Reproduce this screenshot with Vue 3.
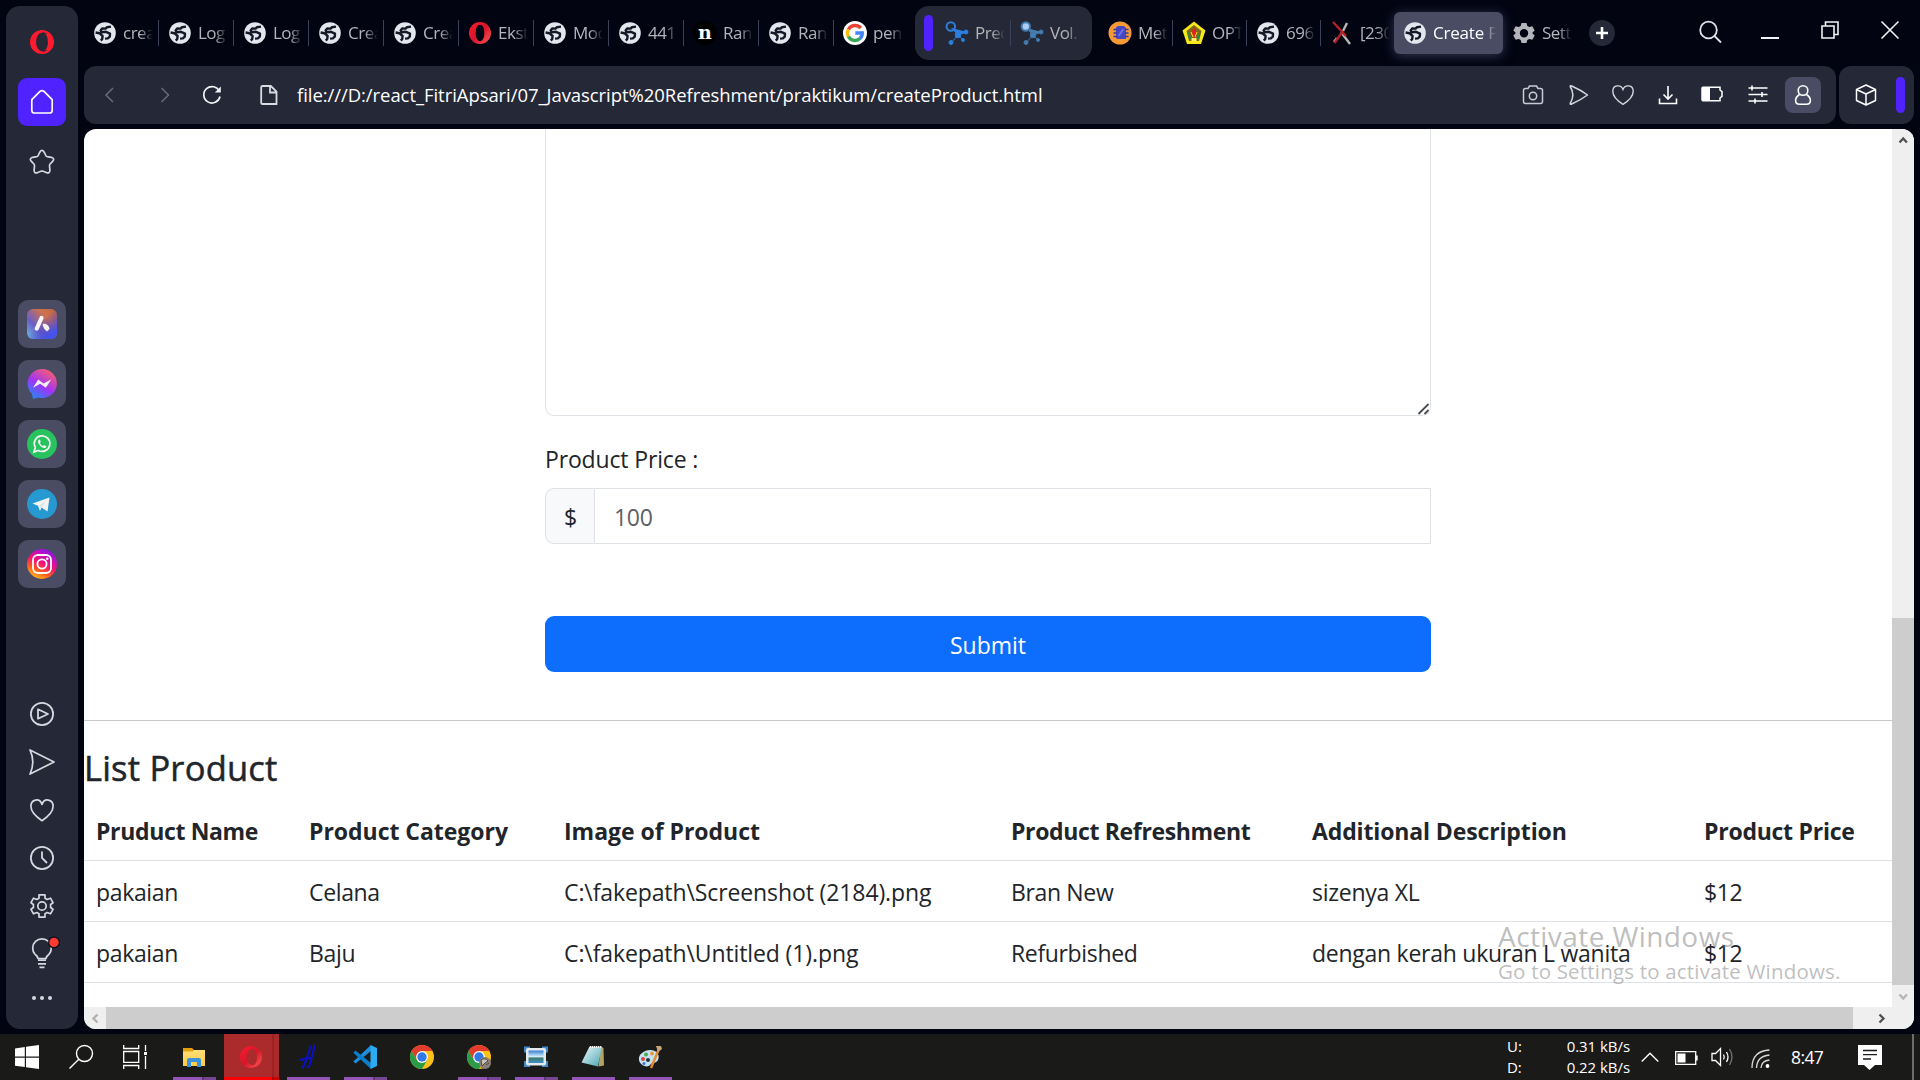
<script setup>
const leadingTabs = [
  { icon: 'globe', title: 'crea' },
  { icon: 'globe', title: 'Log' },
  { icon: 'globe', title: 'Log' },
  { icon: 'globe', title: 'Crea' },
  { icon: 'globe', title: 'Crea' },
  { icon: 'opera-tab', title: 'Ekst' },
  { icon: 'globe', title: 'Mod' },
  { icon: 'globe', title: '441' },
  { icon: 'n', title: 'Ran' },
  { icon: 'globe', title: 'Ran' },
  { icon: 'google', title: 'pen' },
]
const groupTabs = [
  { icon: 'nodes', title: 'Pred' },
  { icon: 'nodes-soft', title: 'Vol.' },
]
const trailingTabs = [
  { icon: 'metode', title: 'Met' },
  { icon: 'crest', title: 'OPT' },
  { icon: 'globe', title: '696' },
  { icon: 'cross', title: '[230' },
]
const apps = ['aria', 'messenger', 'whatsapp', 'telegram', 'instagram']
const tools = ['play', 'send', 'heart', 'clock', 'gear', 'bulb', 'dots']
const barTools = ['camera', 'send-s', 'heart-s', 'download', 'saver', 'sliders']
const url = 'file:///D:/react_FitriApsari/07_Javascript%20Refreshment/praktikum/createProduct.html'
const columns = ['Pruduct Name', 'Product Category', 'Image of Product', 'Product Refreshment', 'Additional Description', 'Product Price']
const products = [
  ['pakaian', 'Celana', 'C:\\fakepath\\Screenshot (2184).png', 'Bran New', 'sizenya XL', '$12'],
  ['pakaian', 'Baju', 'C:\\fakepath\\Untitled (1).png', 'Refurbished', 'dengan kerah ukuran L wanita', '$12'],
]
const tasks = [
  { icon: 'explorer', run: true, many: true },
  { icon: 'opera-task', run: true, many: true, active: true },
  { icon: 'hash', run: true },
  { icon: 'vscode', run: true, many: true },
  { icon: 'chrome', run: false },
  { icon: 'chrome-user', run: true, many: true },
  { icon: 'photos', run: true, many: true },
  { icon: 'notepad', run: true },
  { icon: 'paint', run: true },
]
</script>

<template>
  <div class="screen">
    <svg class="sprite" aria-hidden="true">
      <defs>
        <linearGradient id="g-opera" x1="0" y1="0" x2="1" y2="1"><stop offset="0" stop-color="#ff1b2d" /><stop offset=".5" stop-color="#d8152b" /><stop offset="1" stop-color="#ff5a55" /></linearGradient>
        <linearGradient id="g-aria" x1="0" y1="1" x2="1" y2="0"><stop offset="0" stop-color="#67c3e8" /><stop offset=".35" stop-color="#6a5fc4" /><stop offset=".7" stop-color="#d0714d" /><stop offset="1" stop-color="#b9683f" /></linearGradient>
        <linearGradient id="g-aria2" x1="0" y1="0" x2="1" y2="1"><stop offset=".45" stop-color="#4636c8" stop-opacity="0" /><stop offset=".85" stop-color="#4253f2" /></linearGradient>
        <linearGradient id="g-mess" x1=".2" y1="1" x2=".8" y2="0"><stop offset="0" stop-color="#1f8cf8" /><stop offset=".45" stop-color="#a033f5" /><stop offset="1" stop-color="#ff6068" /></linearGradient>
        <linearGradient id="g-insta" x1=".2" y1="1" x2=".7" y2="0"><stop offset="0" stop-color="#ffc81e" /><stop offset=".3" stop-color="#ff5a1f" /><stop offset=".55" stop-color="#f0127a" /><stop offset="1" stop-color="#8a12f5" /></linearGradient>
        <linearGradient id="g-folder" x1="0" y1="0" x2="0" y2="1"><stop offset="0" stop-color="#ffdf77" /><stop offset="1" stop-color="#ffcb45" /></linearGradient>
        <linearGradient id="g-sky" x1="0" y1="0" x2="0" y2="1"><stop offset="0" stop-color="#2f7fd0" /><stop offset=".5" stop-color="#d8eefa" /><stop offset=".6" stop-color="#3c7b6b" /><stop offset="1" stop-color="#3f90c8" /></linearGradient>
        <linearGradient id="g-note" x1="0" y1="0" x2="1" y2="1"><stop offset="0" stop-color="#eef9fa" /><stop offset="1" stop-color="#4ba5b5" /></linearGradient>
      </defs>
      <symbol id="globe" viewBox="0 0 24 24">
        <circle cx="12" cy="12" r="10.8" fill="#e3e6ec" />
        <path d="M2.600 11.500 6.400 12.200 9.600 15 9.200 18 7.800 19.600M18 5.600 14 6.200 12.600 7.600 9.200 7.400 7.600 9.400 8.600 11.200 13 10.800 17 12.600 16.800 15.600 14.800 17.400 12 17.600" fill="none" stroke="#151827" stroke-width="2.400" stroke-linejoin="round" />
      </symbol>
      <symbol id="opera-tab" viewBox="0 0 24 24"><path fill="url(#g-opera)" fill-rule="evenodd" d="M12 1a11 11 0 1 0 0 22 11 11 0 0 0 0-22zm0 2.800c2.700 0 4.300 3.500 4.300 8.200s-1.600 8.200-4.300 8.200-4.300-3.500-4.300-8.200S9.300 3.800 12 3.800z" /></symbol>
      <symbol id="opera" viewBox="0 0 24 24"><path fill="#ff1b2d" fill-rule="evenodd" d="M12 0a12 12 0 1 0 0 24 12 12 0 0 0 0-24zm1 2.600c3 .8 4.900 4.600 4.900 9.400s-1.900 8.600-4.900 9.400c-4.200 0-6.900-4.200-6.900-9.400S8.800 2.600 13 2.600z" /><path d="M13 2.200 17 4M13 21.800 17 20" stroke="#252836" stroke-width=".8" /></symbol>
      <symbol id="n" viewBox="0 0 24 24"><circle cx="12" cy="12" r="12" fill="#000" /><text x="12" y="18.200" text-anchor="middle" font-family="DejaVu Serif" font-weight="700" font-size="19" fill="#fff">n</text></symbol>
      <symbol id="google" viewBox="0 0 24 24"><circle cx="12" cy="12" r="12" fill="#fff" /><g fill="none" stroke-width="3.400"><path d="M17.800 7.200A7.500 7.500 0 0 0 5.400 8.500" stroke="#ea4335" /><path d="M5.400 8.500a7.500 7.500 0 0 0 0 7.200" stroke="#fbbc05" /><path d="M5.400 15.500A7.500 7.500 0 0 0 17 17.600" stroke="#34a853" /><path d="M16.700 17.800A7.400 7.400 0 0 0 19.300 12H12.300" stroke="#4285f4" /></g></symbol>
      <symbol id="nodes" viewBox="0 0 24 24"><g stroke="#2c7fd8" fill="#2c7fe0"><path d="M6.500 7 13 14 22 11M13 14 6 22M13 14 18 19" /><circle cx="5.800" cy="5.500" r="4.200" fill="none" stroke-width="2" /><circle cx="13" cy="14" r="2.800" /><circle cx="21" cy="11" r="2" /><circle cx="6" cy="21.500" r="2" /><circle cx="18" cy="19" r="1.500" /></g></symbol>
      <symbol id="nodes-soft" viewBox="0 0 24 24"><g stroke="#3f78ad" fill="#477db0"><path d="M6.500 7 13 14 22 11M13 14 6 22M13 14 18 19" /><circle cx="5.800" cy="5.500" r="4.200" fill="#a9cdf3" stroke-width="2" /><circle cx="13" cy="14" r="2.800" /><circle cx="21" cy="11" r="2" /><circle cx="6" cy="21.500" r="2" /><circle cx="18" cy="19" r="1.500" /></g></symbol>
      <symbol id="metode" viewBox="0 0 24 24"><circle cx="12" cy="12" r="11.500" fill="#f59a35" /><path d="M8 6.500 10 5h6l2 2v11H9l-1-1z" fill="#4446c4" /><path d="M5.500 8.500H9M5.500 12H9M5.500 15.500H9M17 8.500h3.500M17 12h3.500M17 15.500h3.500" stroke="#3a35a8" stroke-width="1.500" /><path d="M10.500 15 15.500 8" stroke="#6a72e8" stroke-width="2" /></symbol>
      <symbol id="crest" viewBox="0 0 24 24"><path d="M12 .5 23.500 9.500 19 23H5L.5 9.500z" fill="#f7e81c" /><path d="M12 4 19.500 10 17 20H7L4.500 10z" fill="#7b6a1b" /><path d="M12 6 15 12 12 20 9 12z" fill="#e42222" /><path d="M5.500 10 9.500 18H7zM18.500 10 14.500 18H17z" fill="#139144" /><path d="M9 11 11 16M15 11 13 16" stroke="#f7e81c" /><path d="M9.500 17h5v3h-5z" fill="#fff06a" /></symbol>
      <symbol id="cross" viewBox="0 0 24 24"><path d="M17 2 13 10M7 17 4 21M20 23 11 11" stroke="#b8b3ae" stroke-width="2.400" /><path d="M3 1 16 15M13 10 4.500 22" stroke="#b51f27" stroke-width="2.400" /></symbol>
      <symbol id="gear-fill" viewBox="0 0 24 24"><path fill="#b4b5ba" fill-rule="evenodd" d="M9.500 2h5l.8 3 2 1.100 3-.8 2.400 4.200-2.200 2.100v1l2.200 2-2.400 4.200-3-.8-2 1.100-.8 3h-5l-.8-3-2-1.100-3 .8-2.400-4.200 2.200-2v-1L1.300 9.500l2.400-4.200 3 .8 2-1.100zM12 8a4.200 4.200 0 1 0 0 8.400A4.200 4.200 0 0 0 12 8z" /></symbol>

      <symbol id="home" viewBox="0 0 24 24"><path d="M1.800 9.600v10.600c0 1.700 1 2.800 2.700 2.800h15c1.700 0 2.700-1.100 2.700-2.800V9.600L14 1.400q-2-1.600-4 0z" fill="none" stroke="#fff" stroke-width="1.700" stroke-linejoin="round" /></symbol>
      <symbol id="star" viewBox="0 0 26 26"><path d="M10.800 3.200q2.200-3.800 4.400 0l1.600 3.300q.4.900 1.400 1.100l4.200.7q3.800 1.200 1.200 4l-2.500 2.700q-.7.800-.6 1.900l.4 4.400q-.2 3.700-3.700 2.200l-3-1.200q-1.200-.4-2.400 0l-3 1.200q-3.500 1.500-3.700-2.200l.4-4.400q.1-1.100-.6-1.900l-2.500-2.700q-2.600-2.800 1.200-4l4.200-.7q1-.2 1.400-1.100z" fill="none" stroke="#d4d8e0" stroke-width="1.700" stroke-linejoin="round" /></symbol>
      <symbol id="aria" viewBox="0 0 30 30"><rect width="30" height="30" rx="6" fill="url(#g-aria)" /><rect width="30" height="30" rx="6" fill="url(#g-aria2)" /><path d="M14.500 9 9.800 19.500" stroke="#f5f5f5" stroke-width="4.200" stroke-linecap="round" /><path d="M16.500 14.500Q22 15 22.500 20L20 22.500Q16.500 20 15.500 16z" fill="#f5f5f5" /></symbol>
      <symbol id="messenger" viewBox="0 0 30 30"><path d="M15 0a15 14.500 0 1 1-4 28.500L6 30l-1-5A14.500 14.500 0 0 1 15 0z" fill="url(#g-mess)" /><path d="m6 18.800 5.200-8.200 5.300 4L24.200 10.500 18.800 18.800l-5.600-4z" fill="#f0f0f0" /></symbol>
      <symbol id="whatsapp" viewBox="0 0 30 30"><circle cx="15" cy="15" r="15" fill="#27c35e" /><path d="m7 23 1.300-4.600a7.800 7.800 0 1 1 3 3z" fill="none" stroke="#f3f5f3" stroke-width="1.700" /><path d="M11.800 10.500c-2 2.500.2 5.300 2.500 7.200 2.200 1.700 4.200 1.800 5.200-.3l-2.300-1.500-1.200 1.200c-1.300-.4-2.500-1.700-3.100-3l.9-1.200-.9-2.200z" fill="#f3f5f3" /></symbol>
      <symbol id="telegram" viewBox="0 0 30 30"><circle cx="15" cy="15" r="15" fill="#2799d1" /><path d="M5.500 14.600 22.500 8.500 20.500 22.500 14.500 18.500 13 22 11 16.800z" fill="#f3f3f3" /><path d="m11.500 17 8-5.500-5 7z" fill="#d9e6ee" /></symbol>
      <symbol id="instagram" viewBox="0 0 30 30"><circle cx="15" cy="15" r="15" fill="url(#g-insta)" /><g fill="none" stroke="#fff" stroke-width="1.800"><rect x="6" y="6" width="18" height="18" rx="5" /><circle cx="15" cy="15" r="4.600" /></g><circle cx="20.300" cy="9.800" r="1.200" fill="#fff" /></symbol>

      <symbol id="play" viewBox="0 0 26 26"><g fill="none" stroke="#d4d8e0" stroke-width="1.800" stroke-linejoin="round"><circle cx="13" cy="13" r="11.100" /><path d="M9 8.300v9.400L19 13z" /></g></symbol>
      <symbol id="send" viewBox="0 0 26 26"><path d="M1 .9 25 13 1 25.100Q6.600 13 1 .9z" fill="none" stroke="#d4d8e0" stroke-width="1.700" stroke-linejoin="round" /></symbol>
      <symbol id="heart" viewBox="0 0 26 26"><path d="M13 23.700C6 19 1.900 14.500 1.900 9.300c0-6.800 8.600-9.100 11.100-1.900 2.500-7.200 11.100-4.900 11.100 1.900 0 5.200-4.100 9.700-11.100 14.400z" fill="none" stroke="#d4d8e0" stroke-width="1.700" stroke-linejoin="round" /></symbol>
      <symbol id="clock" viewBox="0 0 26 26"><g fill="none" stroke="#d4d8e0" stroke-width="1.800"><circle cx="13" cy="13" r="11.100" /><path d="M13 6.500V13l5 5" /></g></symbol>
      <symbol id="gear" viewBox="0 0 26 26"><g fill="none" stroke="#d4d8e0" stroke-width="1.700" stroke-linejoin="round"><path d="M10 1.900h6v3.300l2.200 1.300 3.300-1.300 2.500 4.500-2.400 1.800v3l2.400 1.800-2.500 4.500-3.300-1.300-2.200 1.300v3.300h-6v-3.300l-2.200-1.300-3.300 1.300L2 16.300l2.400-1.800v-3L2 9.700l2.500-4.500 3.300 1.300L10 5.200z" /><circle cx="13" cy="13" r="4.200" /></g></symbol>
      <symbol id="bulb" viewBox="0 0 30 30"><path d="M11 19.500Q10.500 17 8 15.300a9.300 9.300 0 1 1 14 0q-2.500 1.700-3 4.200z" fill="none" stroke="#d4d8e0" stroke-width="1.700" /><path d="M11 21.200h8M11 24.800h8M12.500 28.300h5" stroke="#d4d8e0" stroke-width="1.800" /><circle cx="27" cy="3.400" r="6" fill="#0c0e1b" /><circle cx="27" cy="3.400" r="4.700" fill="#ff3a30" /></symbol>
      <symbol id="dots" viewBox="0 0 26 26"><g fill="#d4d8e0"><circle cx="5" cy="9" r="2" /><circle cx="13" cy="9" r="2" /><circle cx="21" cy="9" r="2" /></g></symbol>

      <symbol id="camera" viewBox="0 0 22 22"><g fill="none" stroke="#c9ccd6" stroke-width="1.500"><path d="M3.500 4.500H6L7.500 2h7L16 4.500h2.500q2 0 2 2v11q0 2-2 2h-15q-2 0-2-2v-11q0-2 2-2z" /><circle cx="11" cy="12" r="3.700" /></g></symbol>
      <symbol id="send-s" viewBox="0 0 22 22"><path d="M3.200 2.500Q3.200 1.300 4.700 2 13.700 6 20.500 11 13.700 16 4.700 20 3.200 20.700 3.200 19.500 8.500 11 3.200 2.500z" fill="none" stroke="#d4d7df" stroke-width="1.500" stroke-linejoin="round" /></symbol>
      <symbol id="heart-s" viewBox="0 0 22 22"><path d="M11 20.300C4 16 .8 11.800.8 7.300.8.700 9 .2 11 5.400 13 .2 21.200.7 21.200 7.300c0 4.500-3.200 8.700-10.200 13z" fill="none" stroke="#d4d7df" stroke-width="1.400" /></symbol>
      <symbol id="download" viewBox="0 0 22 22"><path d="M11 2v13M6.500 10.500 11 15l4.500-4.500M2.500 14.500v5h17v-5" fill="none" stroke="#fff" stroke-width="1.600" /></symbol>
      <symbol id="saver" viewBox="0 0 22 22"><path d="M1 3.200h17V6l2 1.700v4.600L18 14v2.800H1q-1 0-1-1V4.200q0-1 1-1z" fill="none" stroke="#fff" stroke-width="1.500" /><path d="M0 3.200h8v13.600H0z" fill="#fff" /></symbol>
      <symbol id="sliders" viewBox="0 0 22 22"><path d="M1.500 4h19M1.500 10.500h19M1.500 17h19M5 1.500v5M15 8v5M8 14.500v5" stroke="#fff" stroke-width="1.600" /></symbol>
      <symbol id="person" viewBox="0 0 22 22"><g fill="none" stroke="#fff" stroke-width="1.600"><circle cx="11" cy="6.500" r="4.800" /><path d="M7.500 10.500Q3.600 13 3.600 16.500q0 3.700 4 3.700h6.800q4 0 4-3.700 0-3.500-3.900-6" /></g></symbol>
      <symbol id="cube" viewBox="0 0 22 22"><path d="M11 1 20.500 5.500V16.500L11 21 1.500 16.500V5.500zM1.500 5.500 11 10l9.500-4.500M11 10v11" fill="none" stroke="#fff" stroke-width="1.500" stroke-linejoin="round" /></symbol>
      <symbol id="back" viewBox="0 0 22 22"><path d="M14 4 7 11l7 7" fill="none" stroke="#696c79" stroke-width="1.500" /></symbol>
      <symbol id="forward" viewBox="0 0 22 22"><path d="m7.500 4 7 7-7 7" fill="none" stroke="#696c79" stroke-width="1.500" /></symbol>
      <symbol id="reload" viewBox="0 0 22 22"><path d="M18.500 7.500A8.200 8.200 0 1 0 19 12.500" fill="none" stroke="#f1f2f4" stroke-width="1.700" /><path d="M19.800 2.500v6h-6z" fill="#f1f2f4" /></symbol>
      <symbol id="doc" viewBox="0 0 22 22"><path d="M4.500 2h8.300l5.700 5.700V20h-14q-1.300 0-1.300-1.300V3.300Q3.200 2 4.500 2zM12 2v6.500h6.500" fill="none" stroke="#d9dbe1" stroke-width="1.800" /></symbol>
      <symbol id="find" viewBox="0 0 24 24"><g fill="none" stroke="#e0e2e8" stroke-width="1.800"><circle cx="10.500" cy="10" r="8.300" /><path d="m16.500 16 6.500 6.500" /></g></symbol>
      <symbol id="minimize" viewBox="0 0 18 18"><path d="M0 17h18" stroke="#f2f3f5" stroke-width="2" /></symbol>
      <symbol id="restore" viewBox="0 0 18 18"><path d="M1 5h12v12H1zM4.500 5V1H17v12.500h-4" fill="none" stroke="#f2f3f5" stroke-width="1.600" /></symbol>
      <symbol id="close" viewBox="0 0 18 18"><path d="m.5.500 17 17M17.500.500l-17 17" stroke="#f2f3f5" stroke-width="1.600" /></symbol>

      <symbol id="start" viewBox="0 0 24 24"><path d="M0 3.400 9.800 2v9.500H0zM11 1.800 24 0v11.500H11zM0 12.700h9.800v9.400L0 20.700zM11 12.700h13V24l-13-1.700z" fill="#fff" /></symbol>
      <symbol id="task-search" viewBox="0 0 24 24"><g fill="none" stroke="#fff" stroke-width="1.400"><circle cx="15.500" cy="8.500" r="8" /><path d="M9.800 14.200.5 23.500" /></g></symbol>
      <symbol id="task-view" viewBox="0 0 24 24"><path d="M.7 0v3.500h15V0M.7 24v-3.500h15V24M.7 6.500h15v10.800H.7zM22.500 0v6M22.500 11v13" fill="none" stroke="#fff" stroke-width="1.300" /><path d="M21 7h3v3h-3z" fill="#fff" /></symbol>
      <symbol id="explorer" viewBox="0 0 24 24"><path d="M1 3h9l2 2v5H1z" fill="#e5a00d" /><path d="M1 6.500h9.500L12 5h11v16H1z" fill="url(#g-folder)" /><path d="M5 21v-6q0-2 2-2h10q2 0 2 2v7h-4v-5H9v5H5z" fill="#3a93dc" /></symbol>
      <symbol id="opera-task" viewBox="0 0 24 24"><path fill="url(#g-opera)" fill-rule="evenodd" d="M12 1a11 11 0 1 0 0 22 11 11 0 0 0 0-22zm1.500 3c3 0 4.500 3.500 4.500 8s-1.500 8-4.500 8c-3.200 0-6-3.500-6-8s2.800-8 6-8z" /></symbol>
      <symbol id="hash" viewBox="0 0 24 24"><path d="M13 1.500h2.500M19.500 1H17M14.500 1.500Q11.500 13 7 22.500H5M18.500 1.500Q16 12 13 22H11M3.500 15Q10 13 15.500 13" fill="none" stroke="#0a10c8" stroke-width="2" /></symbol>
      <symbol id="vscode" viewBox="0 0 24 24"><path d="M18 0 2.500 14.500.3 16.200 2.500 18.500 18 6z" fill="#1a8fdb" /><path d="M18 24 .3 7.800 2.500 5.500 18 18z" fill="#0c7dc9" /><path d="m17.500 0 6.500 3v18l-6.500 3z" fill="#2cabf2" /></symbol>
      <symbol id="chrome" viewBox="0 0 24 24"><circle cx="12" cy="12" r="12" fill="#fbc116" /><path d="M1.600 6A12 12 0 0 1 22.400 6H12L6.800 15z" fill="#e33b2e" /><path d="M1.600 6A12 12 0 0 0 12 24l5.200-9H6.800z" fill="#2a9c48" /><circle cx="12" cy="12" r="5.900" fill="#fff" /><circle cx="12" cy="12" r="4.700" fill="#3178e8" /></symbol>
      <symbol id="chrome-user" viewBox="0 0 24 24"><use href="#chrome" width="24" height="24" /><circle cx="18" cy="18" r="6" fill="#8a8078" /><path d="M14 15q4-3 7 1l-3 2-3 3zM19 20l3-2" fill="#c9c0b6" stroke="#51483f" /></symbol>
      <symbol id="photos" viewBox="0 0 24 24"><path d="M0 1.500h6v6H0zM18 1.500h6v6h-6zM0 16h6v6H0zM18 16h6v6h-6z" fill="#4189c9" /><rect x="2" y="3" width="20" height="17.500" rx="2" fill="#e4e9ee" /><path d="M4.500 5.500h15v12.500h-15z" fill="url(#g-sky)" /></symbol>
      <symbol id="notepad" viewBox="0 0 24 24"><path d="M20 1.500 22.500 3 23 20.500 17.500 21.500z" fill="#b5a267" /><path d="M8.500 1.500H21L17 21.500.5 17.500z" fill="url(#g-note)" /><path d="M9 2h11.500" stroke="#f1f1f1" stroke-width="2" stroke-dasharray="1 1" /></symbol>
      <symbol id="paint" viewBox="0 0 24 24"><path d="M1 15C0 9 7 4.500 13 5c7 .5 9 6 7 10s-6 2-8 5-10 1-11-5z" fill="#c3e2f2" /><circle cx="5" cy="14" r="2" fill="#e2413a" /><circle cx="8" cy="9.500" r="1.900" fill="#4aaa4d" /><circle cx="14" cy="8.500" r="1.900" fill="#f09535" /><circle cx="10" cy="15" r="2" fill="#20343f" /><circle cx="6" cy="18.500" r="1.500" fill="#4070d0" /><path d="M20.500 5 13 23" stroke="#e38b31" stroke-width="2.500" /><path d="m18 1 5 0 1 3-4 3z" fill="#caa27b" /></symbol>
    </svg>

    <div class="browser">
      <aside class="sidebar">
        <div class="side-top">
          <svg class="logo"><use href="#opera" /></svg>
          <div class="home"><svg class="i24"><use href="#home" /></svg></div>
          <svg class="i26"><use href="#star" /></svg>
        </div>
        <div class="side-apps">
          <div v-for="a in apps" :key="a" class="app"><svg class="i30"><use :href="'#' + a" /></svg></div>
        </div>
        <div class="side-tools">
          <div v-for="t in tools" :key="t" class="tool"><svg :class="t === 'bulb' ? 'i30' : 'i26'"><use :href="'#' + t" /></svg></div>
        </div>
      </aside>

      <div class="main">
        <header class="tabs">
          <div v-for="(t, i) in leadingTabs" :key="i" class="tab" :class="{ last: i === leadingTabs.length - 1 }">
            <svg class="i24"><use :href="'#' + t.icon" /></svg><span class="title">{{ t.title }}</span>
          </div>
          <div class="group">
            <i class="group-bar"></i>
            <div v-for="(t, i) in groupTabs" :key="i" class="tab" :class="{ last: i === 1 }">
              <svg class="i24"><use :href="'#' + t.icon" /></svg><span class="title">{{ t.title }}</span>
            </div>
          </div>
          <div v-for="(t, i) in trailingTabs" :key="'t' + i" class="tab narrow" :class="{ last: i === 3 }">
            <svg class="i24"><use :href="'#' + t.icon" /></svg><span class="title">{{ t.title }}</span>
          </div>
          <div class="tab active"><svg class="i24"><use href="#globe" /></svg><span class="title">Create P</span></div>
          <div class="tab last"><svg class="i24"><use href="#gear-fill" /></svg><span class="title">Sett</span></div>
          <div class="new-tab"><svg viewBox="0 0 26 26"><path d="M13 7v12M7 13h12" stroke="#fff" stroke-width="2.600" /></svg></div>
          <div class="window-tools">
            <svg class="i24"><use href="#find" /></svg>
            <svg class="i18"><use href="#minimize" /></svg>
            <svg class="i18"><use href="#restore" /></svg>
            <svg class="i18"><use href="#close" /></svg>
          </div>
        </header>

        <div class="bar-row">
          <div class="address">
            <svg class="i22"><use href="#back" /></svg>
            <svg class="i22 forward"><use href="#forward" /></svg>
            <svg class="i22 reload"><use href="#reload" /></svg>
            <svg class="i22 doc"><use href="#doc" /></svg>
            <span class="url">{{ url }}</span>
            <div class="bar-tools">
              <svg v-for="b in barTools" :key="b" class="i22"><use :href="'#' + b" /></svg>
            </div>
            <div class="profile"><svg class="i22"><use href="#person" /></svg></div>
          </div>
          <div class="extension"><svg class="i22"><use href="#cube" /></svg><i class="ext-bar"></i></div>
        </div>

        <div class="page">
          <div class="content">
            <form class="form" @submit.prevent>
              <div class="textarea">
                <svg viewBox="0 0 14 14"><path d="M2.500 13 12.500 3M8.500 13 12.500 9" stroke="#4a4d50" stroke-width="1.800" /></svg>
              </div>
              <div class="label"><span>Product Price :</span></div>
              <div class="input-group">
                <span class="addon">$</span><span class="field">100</span>
              </div>
              <div class="submit">Submit</div>
            </form>
            <hr />
            <h4>List Product</h4>
            <table>
              <colgroup><col class="c1" /><col class="c2" /><col class="c3" /><col class="c4" /><col class="c5" /><col class="c6" /></colgroup>
              <thead><tr><th v-for="c in columns" :key="c">{{ c }}</th></tr></thead>
              <tbody>
                <tr v-for="(p, r) in products" :key="r"><td v-for="(v, c) in p" :key="c">{{ v }}</td></tr>
              </tbody>
            </table>
          </div>
          <div class="vbar">
            <div class="cap"><svg viewBox="0 0 22 22"><path d="m7.500 13.500 3.700-4 3.700 4" fill="none" stroke="#505050" stroke-width="2.300" /></svg></div>
            <div class="vthumb"></div>
            <div class="cap"><svg viewBox="0 0 22 22"><path d="m7.500 9.500 3.700 4 3.700-4" fill="none" stroke="#b5b5b5" stroke-width="2.300" /></svg></div>
          </div>
          <div class="hbar">
            <div class="cap"><svg viewBox="0 0 22 22"><path d="M13.500 7.500 9.500 11.500l4 4" fill="none" stroke="#b0b0b0" stroke-width="2.300" /></svg></div>
            <div class="hthumb"></div>
            <div class="cap end"><svg viewBox="0 0 22 22"><path d="m9.500 7.500 4 4-4 4" fill="none" stroke="#505050" stroke-width="2.300" /></svg></div>
          </div>
        </div>
      </div>
    </div>

    <footer class="taskbar">
      <div class="sys"><svg class="i24"><use href="#start" /></svg><svg class="i24"><use href="#task-search" /></svg><svg class="i24"><use href="#task-view" /></svg></div>
      <div v-for="t in tasks" :key="t.icon" class="task" :class="{ run: t.run, many: t.many, on: t.active }"><svg class="i24"><use :href="'#' + t.icon" /></svg></div>
      <div class="tray">
        <div class="net"><span>U:</span><span>0.31 kB/s</span><span>D:</span><span>0.22 kB/s</span></div>
        <svg class="chev" viewBox="0 0 18 12"><path d="m.7 10.500 8.300-8.300 8.300 8.300" fill="none" stroke="#fff" stroke-width="1.400" /></svg>
        <svg class="batt" viewBox="0 0 23 14"><path d="M.7.700h20v12.600h-20zM22 4.500v5" fill="none" stroke="#fff" stroke-width="1.300" /><path d="M2.500 2.500h8v9h-8z" fill="#fff" /></svg>
        <svg class="vol" viewBox="0 0 23 20"><path d="M1 6.500h3.500L9.500 1.500v17l-5-5H1z" fill="none" stroke="#fff" stroke-width="1.300" /><path d="M12.500 7.500q1.500 2.500 0 5M15.500 5q3 5 0 10" fill="none" stroke="#fff" stroke-width="1.300" /><path d="M18.500 2q5 8 0 16" fill="none" stroke="#737373" stroke-width="1.300" /></svg>
        <svg class="wifi" viewBox="0 0 20 20"><path d="M1 19Q1 2 18.500 1M5.500 19Q6 7 18.500 6M10 19Q10.500 11.500 18.500 11" fill="none" stroke="#d8d8d8" stroke-width="1.300" /><circle cx="16.500" cy="17" r="1.900" fill="#fff" /></svg>
        <span class="time">8:47</span>
        <svg class="note" viewBox="0 0 24 25"><path d="M0 0h24v20h-7l-5.500 5-5.500-5H0z" fill="#fff" /><path d="M5 5.500h14M5 9.700h14M5 14h8" stroke="#1a1a1a" stroke-width="1.300" /></svg>
        <i class="peek"></i>
      </div>
    </footer>

    <div class="watermark"><div class="wm1">Activate Windows</div><div class="wm2">Go to Settings to activate Windows.</div></div>
  </div>
</template>

<style>
body { margin: 0; background: #020412; overflow: hidden; }
</style>

<style scoped>
* { box-sizing: border-box; }
.screen { position: relative; width: 1920px; height: 1080px; overflow: hidden; background: #020412; font-family: "Open Sans", "Noto Sans", sans-serif; display: flex; flex-direction: column; }
.sprite { position: absolute; width: 0; height: 0; }
svg { display: block; flex: none; overflow: visible; }
symbol { overflow: visible; }
.i18 { width: 18px; height: 18px; }
.i22 { width: 22px; height: 22px; }
.i24 { width: 24px; height: 24px; }
.i26 { width: 26px; height: 26px; }
.i30 { width: 30px; height: 30px; }

.browser { height: 1034px; display: flex; padding: 0 6px 5px; gap: 6px; }
.sidebar { width: 72px; height: 1023px; margin-top: 6px; border-radius: 14px; background: #252836; display: flex; flex-direction: column; align-items: center; }
.side-top { height: 294px; padding-top: 24px; display: flex; flex-direction: column; align-items: center; }
.logo { width: 24px; height: 24px; }
.home { width: 48px; height: 48px; margin: 24px 0 23px; border-radius: 9px; background: #4f22ff; display: flex; align-items: center; justify-content: center; }
.side-apps { display: flex; flex-direction: column; gap: 12px; height: 390px; }
.app { width: 48px; height: 48px; border-radius: 10px; background: #4a4c64; display: flex; align-items: center; justify-content: center; }
.tool { height: 48px; display: flex; align-items: center; justify-content: center; }

.main { width: 1830px; display: flex; flex-direction: column; }
.tabs { height: 66px; display: flex; align-items: center; }
.tab { position: relative; flex: none; width: 75px; height: 26px; display: flex; align-items: center; padding-left: 9px; gap: 6px; border-right: 1px solid #3d4059; color: #b4b5ba; font-size: 17px; }
.tab.last { border-right-color: transparent; }
.tab.narrow { width: 74px; }
.title { width: 30px; overflow: hidden; white-space: nowrap; letter-spacing: -.5px; line-height: 26px; -webkit-mask-image: linear-gradient(90deg, #000 55%, transparent 100%); mask-image: linear-gradient(90deg, #000 55%, transparent 100%); }
.group { flex: none; width: 177px; height: 54px; margin: 0 7px 0 6px; padding-left: 9px; border-radius: 14px; background: #252836; display: flex; align-items: center; }
.group-bar { width: 9px; height: 36px; border-radius: 5px; background: #4f22ff; margin-right: 3px; }
.tab.active { width: 109px; height: 42px; margin-left: -1px; border: 0; border-radius: 6px; background: #4a4c64; color: #fff; box-shadow: 0 2px 12px rgba(90, 94, 130, .55); }
.tab.active .title { width: 63px; letter-spacing: -.2px; -webkit-mask-image: linear-gradient(90deg, #000 76%, transparent); mask-image: linear-gradient(90deg, #000 76%, transparent); }
.new-tab { flex: none; width: 26px; height: 26px; margin-left: 11px; border-radius: 50%; background: #252836; }
.window-tools { flex: 1; display: flex; align-items: center; justify-content: flex-end; gap: 42px; padding-right: 15px; padding-bottom: 6px; }
.window-tools .i24 { margin: 4px -3px 0 0; }

.bar-row { height: 58px; display: flex; gap: 3px; }
.address { width: 1752px; height: 58px; border-radius: 12px; background: #252836; display: flex; align-items: center; padding: 0 15px; }
.forward { margin-left: 33px; }
.reload { margin-left: 25px; }
.doc { margin-left: 35px; }
.url { width: 1100px; margin: -2px 0 0 17px; color: #fff; font-size: 18.500px; letter-spacing: -.06px; white-space: nowrap; }
.bar-tools { display: flex; gap: 23px; margin-left: auto; margin-right: 16px; }
.profile { width: 36px; height: 36px; border-radius: 8px; background: #4a4c64; display: flex; align-items: center; justify-content: center; }
.extension { width: 75px; height: 58px; border-radius: 12px; background: #252836; display: flex; align-items: center; padding-left: 16px; }
.ext-bar { width: 9px; height: 36px; margin-left: 19px; border-radius: 5px; background: #4f22ff; }

.page { width: 1830px; height: 900px; margin-top: 5px; border-radius: 12px; overflow: hidden; background: #fff; display: grid; grid-template-columns: 1808px 22px; grid-template-rows: 878px 22px; }
.content { color: #212529; font-size: 23px; overflow: hidden; }
.form { width: 886px; margin-left: 461px; }
.textarea { height: 287px; border: 1px solid #dee2e6; border-top: 0; border-radius: 0 0 9px 9px; display: flex; align-items: flex-end; justify-content: flex-end; }
.textarea svg { width: 14px; height: 14px; }
.label { height: 72px; display: flex; align-items: center; padding-top: 14px; letter-spacing: -.15px; }
.label span { line-height: 36px; }
.input-group { height: 56px; display: flex; line-height: 56px; }
.addon { width: 50px; border: 1px solid #dee2e6; border-radius: 9px 0 0 9px; background: #f8f9fa; text-align: center; padding-left: 1px; }
.field { flex: 1; border: 1px solid #dee2e6; border-left: 0; padding-left: 19px; color: #5c6066; letter-spacing: -.3px; }
.submit { height: 56px; margin-top: 72px; border-radius: 9px; background: #0d6efd; color: #fff; text-align: center; line-height: 59px; letter-spacing: 0; }
hr { height: 1px; margin: 48px 0 25px; border: 0; background: #c8c9ca; }
h4 { margin: 0 0 10px; height: 43px; line-height: 43px; font-size: 34.500px; font-weight: 500; letter-spacing: .2px; -webkit-text-stroke: .5px #212529; }
table { width: 1808px; table-layout: fixed; border-collapse: collapse; }
.c1 { width: 213px; } .c2 { width: 255px; } .c3 { width: 447px; } .c4 { width: 301px; } .c5 { width: 392px; } .c6 { width: 200px; }
th, td { height: 61px; padding: 2px 12px 0; text-align: left; border-bottom: 1px solid #dee2e6; white-space: nowrap; letter-spacing: -.35px; line-height: 36px; }
th { font-weight: 700; padding-top: 4px; }
th:nth-child(2), th:nth-child(3) { letter-spacing: -.03px; }
th:nth-child(5) { letter-spacing: -.13px; }
th:nth-child(6) { letter-spacing: -.25px; }
td:nth-child(3) { letter-spacing: -.11px; }
td:nth-child(5) { letter-spacing: -.26px; }
.vbar { background: #efefef; display: flex; flex-direction: column; }
.cap, .cap svg { width: 22px; height: 22px; }
.vthumb { height: 367px; margin-top: auto; background: #cdcdcd; }
.hbar { grid-column: 1 / 3; background: #efefef; display: flex; }
.hthumb { width: 1747px; background: #cdcdcd; }
.end { margin-left: 17px; }

.taskbar { height: 46px; background: #1a1a19; display: flex; color: #fff; }
.sys { width: 167px; padding-left: 15px; display: flex; gap: 30px; align-items: center; }
.task { position: relative; width: 57px; display: flex; align-items: center; justify-content: center; padding-right: 4px; }
.task.run::after { content: ""; position: absolute; left: 6px; bottom: 0; width: 43px; height: 3px; background: #9356b8; }
.task.many::after { background: linear-gradient(90deg, #9356b8 29px, #5d3673 29px, #5d3673 31px, #764594 31px); }
.task.on { background: linear-gradient(90deg, #ab2b2c 48px, #9e2021 48px, #9e2021 50px, #a82a2b 50px); background-size: 55px 100%; background-repeat: no-repeat; }
.task.on::after { left: 0; width: 55px; background: linear-gradient(90deg, #f00 48px, #b00000 48px, #b00000 50px, #d00000 50px); }
.tray { flex: 1; display: flex; align-items: center; justify-content: flex-end; }
.net { width: 123px; display: grid; grid-template-columns: 24px 1fr; font-size: 15px; line-height: 21px; letter-spacing: -.05px; }
.net span:nth-child(even) { text-align: right; }
.chev { width: 18px; height: 12px; margin-left: 11px; }
.batt { width: 23px; height: 14px; margin: 1px 0 0 16px; }
.vol { width: 23px; height: 20px; margin-left: 13px; }
.wifi { width: 20px; height: 20px; margin: 3px 0 0 17px; }
.time { width: 34px; margin-left: 20px; font-size: 17.500px; letter-spacing: -.6px; white-space: nowrap; }
.note { width: 24px; height: 25px; margin-left: 33px; }
.peek { width: 2px; height: 46px; margin: 0 6px 0 30px; background: #6d6d6d; }

.watermark { position: absolute; left: 1498px; top: 914px; color: rgba(125, 125, 125, .5); white-space: nowrap; }
.wm1 { font-size: 28px; line-height: 44px; letter-spacing: .42px; }
.wm2 { font-size: 20.500px; line-height: 26px; letter-spacing: .19px; }
</style>
